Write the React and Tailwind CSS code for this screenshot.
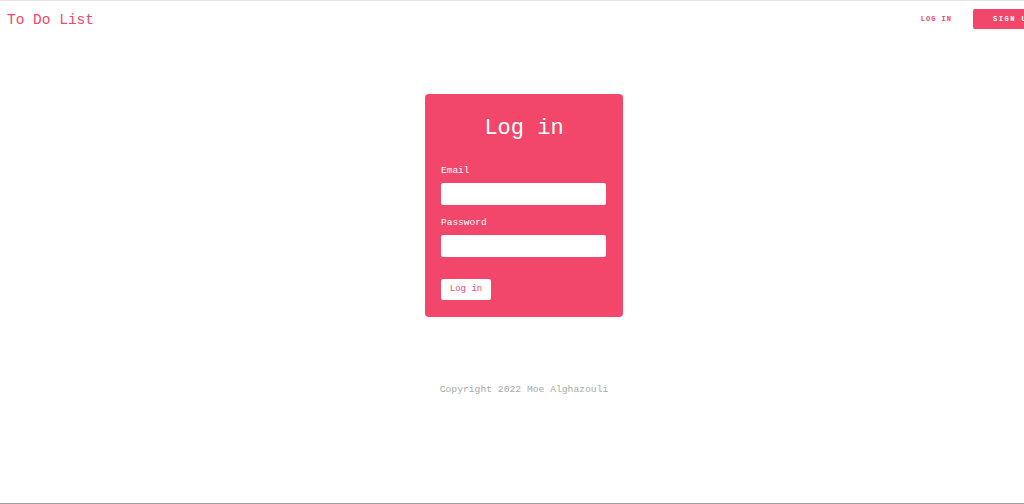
export default function App() {
  const mono = { fontFamily: '"Liberation Mono", "Courier New", monospace' }
  return (
    <div
      className="h-screen w-full overflow-hidden border-t border-b border-t-[#e6e6e6] border-b-[#a0a0a0] bg-white"
      style={mono}
    >
      <header className="flex h-[36px] w-[1060px] items-center justify-between pl-[7px] pr-[7px]">
        <span className="pt-[3px] text-[14.5px] text-[#f2476a]">To Do List</span>
        <nav className="flex items-center gap-[21px]">
          <a className="text-[7px] font-bold tracking-[1px] text-[#f2476a]">LOG IN</a>
          <a className="flex h-[20px] w-[80px] items-center justify-center rounded-[2px] bg-[#f2476a] text-[7px] font-bold tracking-[1.5px] text-white">
            SIGN UP
          </a>
        </nav>
      </header>

      <main className="flex w-[1048px] flex-col items-center pt-[57px]">
        <div className="w-[198px] rounded-[4px] bg-[#f2476a] px-[16px] pt-[22px] pb-[17px]">
          <h1 className="text-center text-[22px] leading-[26px] text-white">Log in</h1>
          <form className="mt-[24px] flex flex-col">
            <label className="mb-[7px] text-[9.5px] leading-[10px] text-white">Email</label>
            <input className="h-[22px] w-[165px] rounded-[2px] bg-white outline-none" />
            <label className="mt-[13px] mb-[7px] text-[9.5px] leading-[10px] text-white">Password</label>
            <input type="password" className="h-[22px] w-[165px] rounded-[2px] bg-white outline-none" />
            <button
              type="button"
              className="mt-[22px] h-[21px] w-[50px] rounded-[2px] bg-white text-[9px] text-[#f2476a]"
            >
              Log in
            </button>
          </form>
        </div>

        <p className="mt-[66px] text-[9.7px] text-[#aaaaaa]">Copyright 2022 Moe Alghazouli</p>
      </main>
    </div>
  )
}
